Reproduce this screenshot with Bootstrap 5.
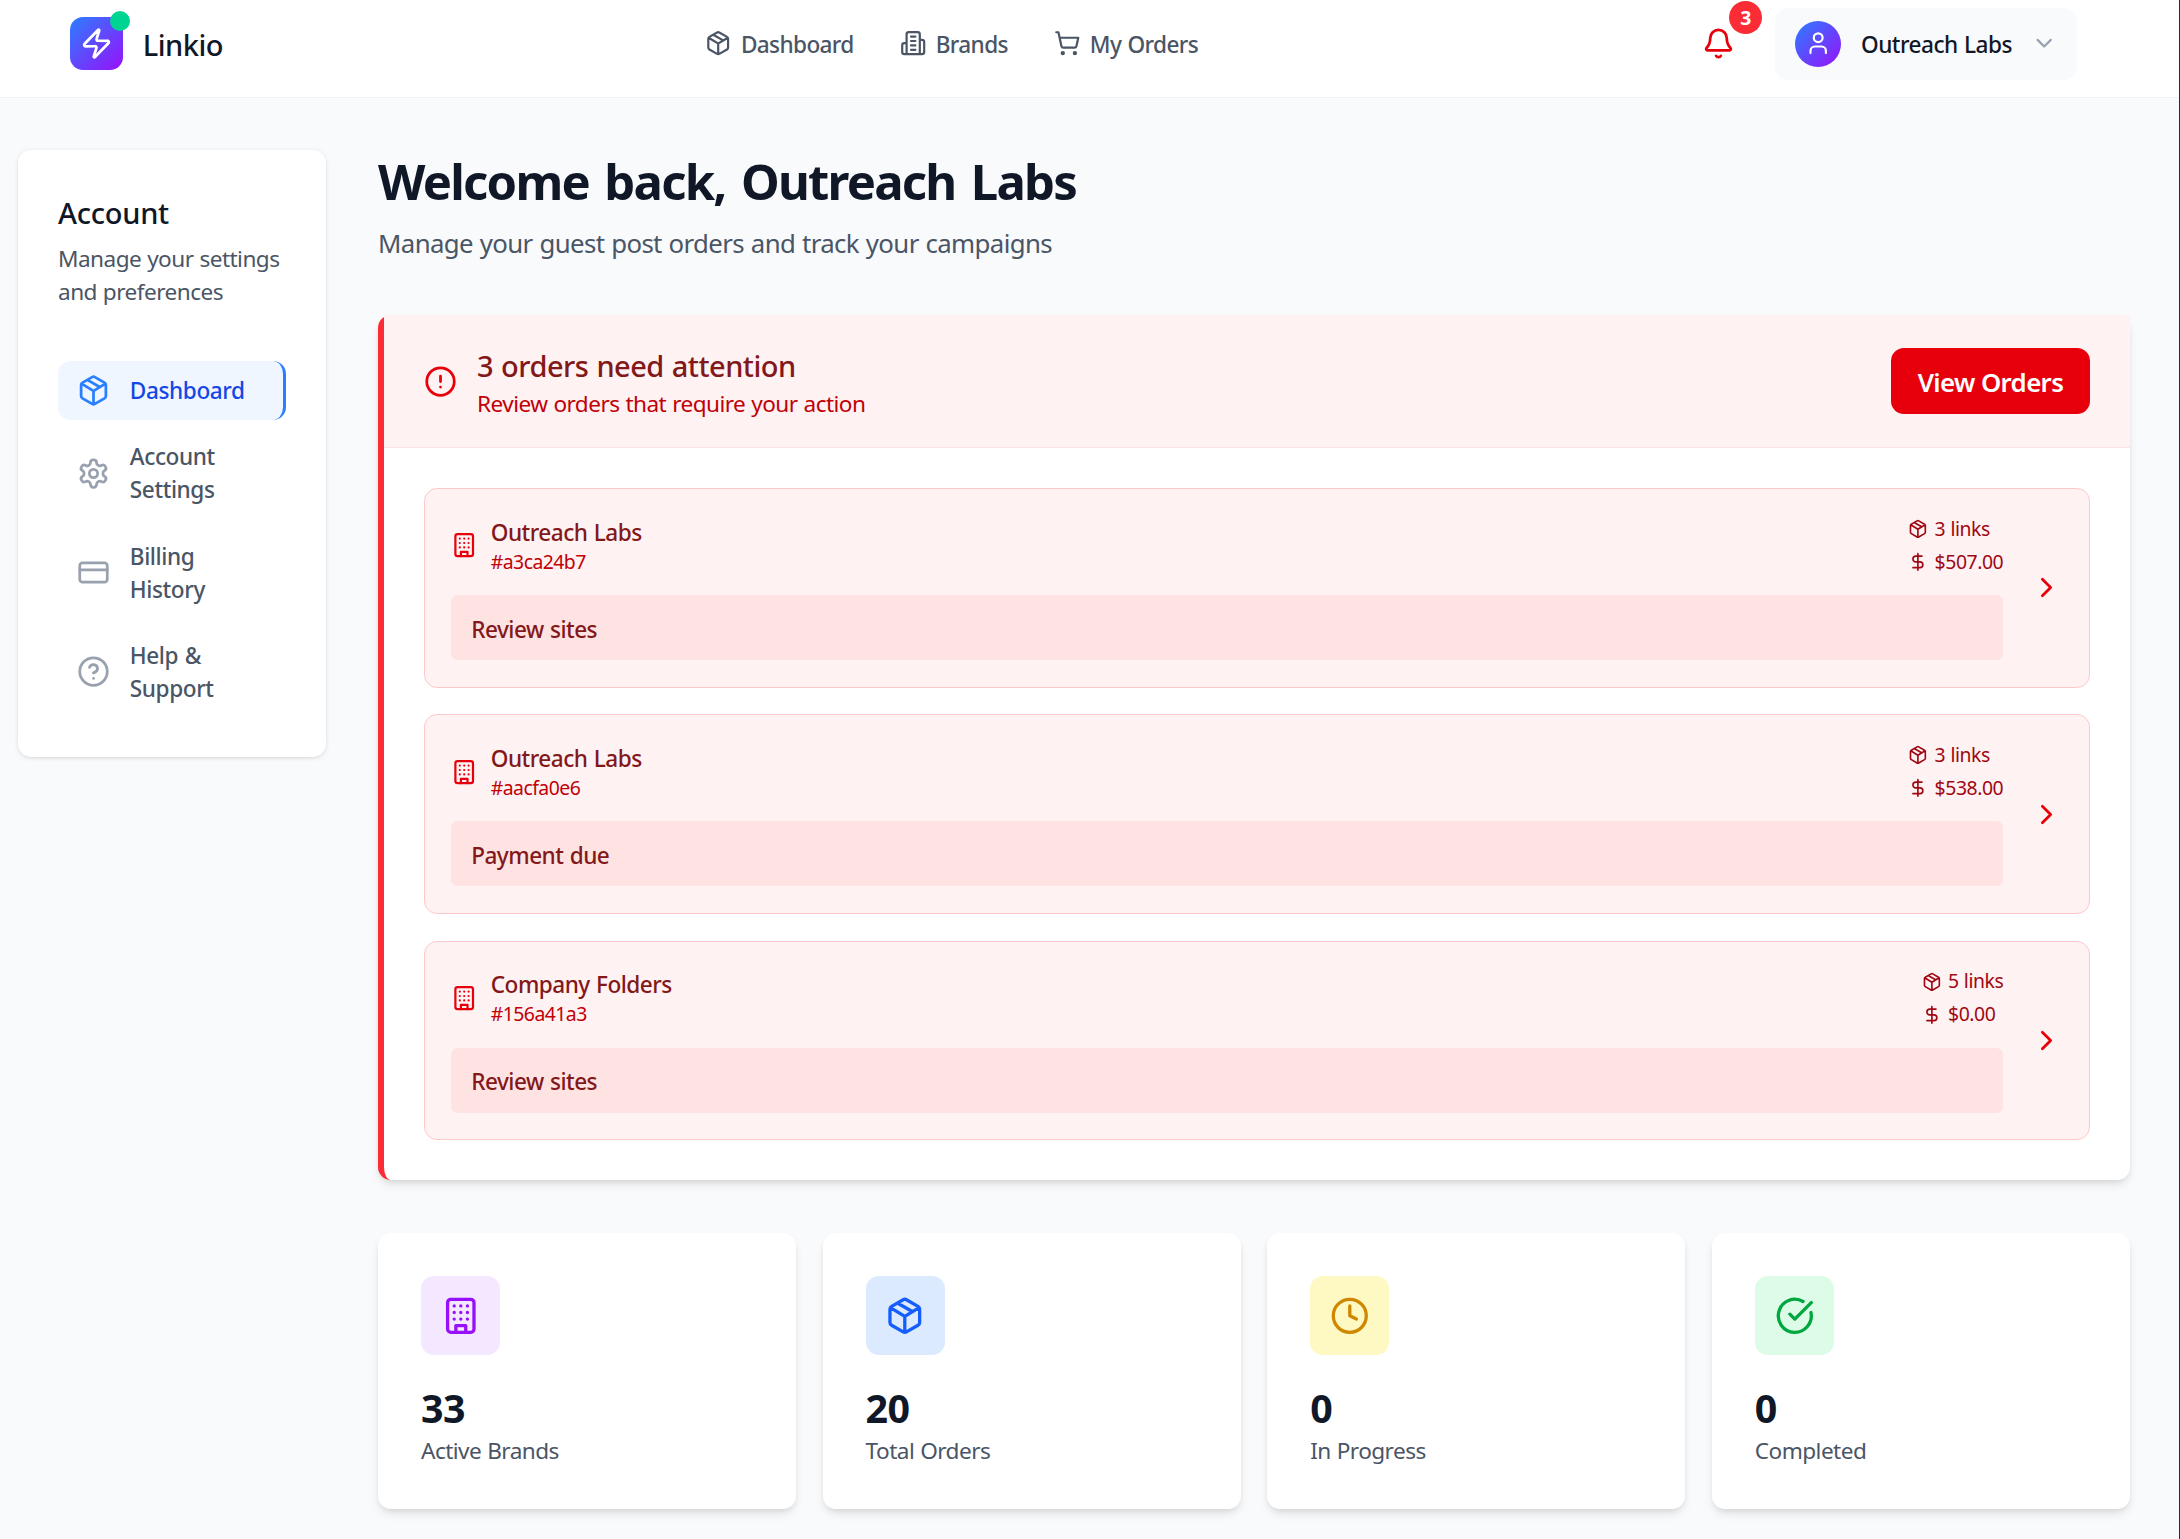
<!DOCTYPE html>
<html lang="en">
<head>
<meta charset="utf-8">
<meta name="viewport" content="width=device-width, initial-scale=1">
<title>Linkio Dashboard</title>
<link href="https://cdn.jsdelivr.net/npm/bootstrap@5.3.0/dist/css/bootstrap.min.css" rel="stylesheet">
<style>
body{font-family:"Noto Sans","Open Sans",sans-serif;font-size:22.6px;line-height:33px;letter-spacing:-.54px;word-spacing:.6px;color:#101828;background:#f9fafc;border-right:1px solid #2b2b2b;min-height:1539px;overflow:hidden}
.ico{width:33px;height:33px;flex:none;fill:none;stroke:currentColor;stroke-width:2;stroke-linecap:round;stroke-linejoin:round;display:block}
.ico-md{width:26.4px;height:26.4px}
.ico-sm{width:19.8px;height:19.8px}
.ico-lg{width:39.6px;height:39.6px}
.semi{font-weight:500;letter-spacing:-.52px;word-spacing:1px}
.topbar{height:98px;border-bottom:1px solid #f0f2f5;padding:0 102px 10px 70px}
.brand{width:635px;gap:19.8px;font-size:29px;color:#101828}
.brand span:last-child{padding-top:2px}
.brand-mark{width:53px;height:53px;border-radius:13px;background:linear-gradient(135deg,#2b7fff,#9810fa);color:#fff}
.brand-dot{width:20px;height:20px;top:-6px;right:-7px;background:#00d492}
.topnav{gap:46px;letter-spacing:-.62px}
.topnav a{gap:9.5px;color:#4a5565;text-decoration:none}
.topnav span,.user-name{padding-top:1px}
.bell{color:#e7000b;margin-right:40px}
.bell-count{width:33px;height:33px;left:27px;top:-26px;background:#fb2c36;font-size:19.4px;font-weight:700;color:#fff}
.user-pill{width:302px;height:72px;border-radius:13px;background:#f9fafc;padding:0 20px}
.user-pill .chev{color:#99a1af}
.avatar{width:46px;height:46px;background:linear-gradient(135deg,#2b7fff,#9810fa);color:#fff}
.shell{padding:52px 49px 0 18px;gap:52px}
.side{width:308px;height:607px;flex:none;border-radius:13px;background:#fff;padding:40px;box-shadow:0 1px 5px rgba(0,0,0,.1),0 1px 3px -1px rgba(0,0,0,.1)}
.side h2{font-size:29px;line-height:46px;letter-spacing:-.25px;margin-bottom:6px}
.side p{color:#4a5565;margin-bottom:52.6px;white-space:nowrap}
.side-nav{gap:7px;letter-spacing:-.4px}
.side-nav a{color:#4a5565;text-decoration:none;padding:13.2px 19px;gap:19.8px;border-radius:13px}
.side-nav .ico{color:#99a1af}
.side-nav a.current{background:#eff6ff;color:#1447e6;border-right:3px solid #2b7fff}
.side-nav a.current .ico{color:#2b7fff}
.hello{font-size:49px;line-height:62px;font-weight:700;letter-spacing:-1.75px;word-spacing:4.4px;margin:0 0 11px}
.hello-sub{font-size:25.8px;line-height:40px;letter-spacing:-.62px;word-spacing:.7px;color:#4a5565;margin-bottom:52px}
.raised{box-shadow:0 6px 11px -2px rgba(0,0,0,.1),0 3px 7px -3px rgba(0,0,0,.12)}
.alert-panel{border-left:6px solid #fb2c36;border-radius:13px;background:#fff;height:865px}
.alert-top{height:133px;background:#fef2f2;border-bottom:1px solid #ffe2e2;padding:0 40px}
.alert-top .ico{color:#e7000b}
.alert-top h3{font-size:29px;line-height:42px;margin:0;padding-top:3px;color:#82181a}
.alert-top p{color:#c10007;margin:0}
.btn-view,.btn-view:hover{background:#e7000b;color:#fff;border:0;border-radius:13px;width:199px;height:66px;font-size:25.8px;font-weight:600;letter-spacing:-.62px;padding:2px 0 0}
.order-list{padding:40px;gap:26.4px}
.order{border:1px solid #ffc9c9;border-radius:13px;background:#fef2f2;padding:26.4px;gap:26.4px;height:199.9px}
.order .ico{color:#e7000b}
.order-text{margin-left:13px}
.order-name{color:#82181a}
.order-id{font-size:19.4px;line-height:26.4px;color:#c10007}
.order-meta{font-size:19.4px;line-height:26.4px;letter-spacing:-.45px;gap:6.6px;color:#9f0712}
.order-meta .ico{color:#9f0712}
.order-meta .line{gap:6.6px}
.order-task{background:#ffe2e2;border-radius:6.6px;height:65px;color:#82181a;padding:3px 19.8px 0;margin-top:19.8px}
.stats{gap:26.4px;margin-top:53px}
.stat{flex:1 1 0;height:276px;border-radius:13px;background:#fff;padding:43px}
.stat-ico{width:79.2px;height:79.2px;border-radius:13px;margin-bottom:27px}
.stat strong{display:block;font-size:39.4px;line-height:53px;margin-bottom:-1.6px}
.stat span{color:#4a5565}
.c-purple{background:#f3e8ff;color:#9810fa}
.c-blue{background:#dbeafe;color:#155dfc}
.c-yellow{background:#fef9c2;color:#d08700}
.c-green{background:#dcfce7;color:#00a63e}
</style>
</head>
<body>
<svg width="0" height="0" class="position-absolute" aria-hidden="true">
<symbol id="package" viewBox="0 0 24 24"><path d="M11 21.73a2 2 0 0 0 2 0l7-4A2 2 0 0 0 21 16V8a2 2 0 0 0-1-1.73l-7-4a2 2 0 0 0-2 0l-7 4A2 2 0 0 0 3 8v8a2 2 0 0 0 1 1.73zM12 22V12M3.3 7l7.703 4.734a2 2 0 0 0 1.994 0L20.7 7M7.5 4.27l9 5.15"/></symbol>
<symbol id="zap" viewBox="0 0 24 24"><path d="M4 14a1 1 0 0 1-.78-1.63l9.9-10.2a.5.5 0 0 1 .86.46l-1.92 6.02A1 1 0 0 0 13 10h7a1 1 0 0 1 .78 1.63l-9.9 10.2a.5.5 0 0 1-.86-.46l1.92-6.02A1 1 0 0 0 11 14z"/></symbol>
<symbol id="towers" viewBox="0 0 24 24"><path d="M6 22V4a2 2 0 0 1 2-2h8a2 2 0 0 1 2 2v18ZM6 12H4a2 2 0 0 0-2 2v6a2 2 0 0 0 2 2h2M18 9h2a2 2 0 0 1 2 2v9a2 2 0 0 1-2 2h-2M10 6h4M10 10h4M10 14h4M10 18h4"/></symbol>
<symbol id="cart" viewBox="0 0 24 24"><circle cx="8" cy="21" r="1"/><circle cx="19" cy="21" r="1"/><path d="M2.05 2.05h2l2.66 12.42a2 2 0 0 0 2 1.58h9.78a2 2 0 0 0 1.95-1.57l1.65-7.43H5.12"/></symbol>
<symbol id="bell" viewBox="0 0 24 24"><path d="M10.268 21a2 2 0 0 0 3.464 0M3.262 15.326A1 1 0 0 0 4 17h16a1 1 0 0 0 .74-1.673C19.41 13.956 18 12.499 18 8A6 6 0 0 0 6 8c0 4.499-1.411 5.956-2.738 7.326"/></symbol>
<symbol id="user" viewBox="0 0 24 24"><path d="M19 21v-2a4 4 0 0 0-4-4H9a4 4 0 0 0-4 4v2"/><circle cx="12" cy="7" r="4"/></symbol>
<symbol id="down" viewBox="0 0 24 24"><path d="m6 9 6 6 6-6"/></symbol>
<symbol id="right" viewBox="0 0 24 24"><path d="m9 18 6-6-6-6"/></symbol>
<symbol id="gear" viewBox="0 0 24 24"><path d="M12.22 2h-.44a2 2 0 0 0-2 2v.18a2 2 0 0 1-1 1.73l-.43.25a2 2 0 0 1-2 0l-.15-.08a2 2 0 0 0-2.73.73l-.22.38a2 2 0 0 0 .73 2.73l.15.1a2 2 0 0 1 1 1.72v.51a2 2 0 0 1-1 1.74l-.15.09a2 2 0 0 0-.73 2.73l.22.38a2 2 0 0 0 2.73.73l.15-.08a2 2 0 0 1 2 0l.43.25a2 2 0 0 1 1 1.73V20a2 2 0 0 0 2 2h.44a2 2 0 0 0 2-2v-.18a2 2 0 0 1 1-1.73l.43-.25a2 2 0 0 1 2 0l.15.08a2 2 0 0 0 2.73-.73l.22-.39a2 2 0 0 0-.73-2.73l-.15-.08a2 2 0 0 1-1-1.74v-.5a2 2 0 0 1 1-1.74l.15-.09a2 2 0 0 0 .73-2.73l-.22-.38a2 2 0 0 0-2.73-.73l-.15.08a2 2 0 0 1-2 0l-.43-.25a2 2 0 0 1-1-1.73V4a2 2 0 0 0-2-2z"/><circle cx="12" cy="12" r="3"/></symbol>
<symbol id="creditcard" viewBox="0 0 24 24"><rect width="20" height="14" x="2" y="5" rx="2"/><path d="M2 10h20"/></symbol>
<symbol id="help" viewBox="0 0 24 24"><circle cx="12" cy="12" r="10"/><path d="M9.09 9a3 3 0 0 1 5.83 1c0 2-3 3-3 3M12 17h.01"/></symbol>
<symbol id="warn" viewBox="0 0 24 24"><circle cx="12" cy="12" r="10"/><path d="M12 8v4M12 16h.01"/></symbol>
<symbol id="building" viewBox="0 0 24 24"><rect width="16" height="20" x="4" y="2" rx="2"/><path d="M9 22v-4h6v4M8 6h.01M16 6h.01M12 6h.01M12 10h.01M12 14h.01M16 10h.01M16 14h.01M8 10h.01M8 14h.01"/></symbol>
<symbol id="dollar" viewBox="0 0 24 24"><path d="M12 2v20M17 5H9.5a3.5 3.5 0 0 0 0 7h5a3.5 3.5 0 0 1 0 7H6"/></symbol>
<symbol id="clock" viewBox="0 0 24 24"><circle cx="12" cy="12" r="10"/><path d="M12 6v6l4 2"/></symbol>
<symbol id="done" viewBox="0 0 24 24"><path d="M21.801 10A10 10 0 1 1 17 3.335M9 11l3 3L22 4"/></symbol>
</svg>

<header class="topbar bg-white d-flex align-items-center">
  <a href="#" class="brand d-flex align-items-center semi text-decoration-none">
    <span class="brand-mark position-relative d-flex align-items-center justify-content-center">
      <svg class="ico"><use href="#zap"/></svg>
      <i class="brand-dot position-absolute rounded-circle"></i>
    </span>
    <span>Linkio</span>
  </a>
  <nav class="topnav d-flex semi">
    <a href="#" class="d-flex align-items-center"><svg class="ico ico-md"><use href="#package"/></svg><span>Dashboard</span></a>
    <a href="#" class="d-flex align-items-center"><svg class="ico ico-md"><use href="#towers"/></svg><span>Brands</span></a>
    <a href="#" class="d-flex align-items-center"><svg class="ico ico-md"><use href="#cart"/></svg><span>My Orders</span></a>
  </nav>
  <div class="d-flex align-items-center ms-auto">
    <a href="#" class="bell position-relative"><svg class="ico"><use href="#bell"/></svg>
      <b class="bell-count position-absolute rounded-circle d-flex align-items-center justify-content-center">3</b></a>
    <div class="user-pill d-flex align-items-center semi">
      <span class="avatar rounded-circle d-flex align-items-center justify-content-center me-3"><svg class="ico ico-md"><use href="#user"/></svg></span>
      <span class="user-name ms-1">Outreach Labs</span>
      <svg class="ico ico-md ms-auto chev"><use href="#down"/></svg>
    </div>
  </div>
</header>

<div class="shell d-flex align-items-start">
  <aside class="side">
    <h2 class="semi">Account</h2>
    <p>Manage your settings<br>and preferences</p>
    <nav class="side-nav d-flex flex-column semi">
      <a href="#" class="current d-flex align-items-center"><svg class="ico"><use href="#package"/></svg><span>Dashboard</span></a>
      <a href="#" class="d-flex align-items-center"><svg class="ico"><use href="#gear"/></svg><span>Account<br>Settings</span></a>
      <a href="#" class="d-flex align-items-center"><svg class="ico"><use href="#creditcard"/></svg><span>Billing<br>History</span></a>
      <a href="#" class="d-flex align-items-center"><svg class="ico"><use href="#help"/></svg><span>Help &amp;<br>Support</span></a>
    </nav>
  </aside>

  <main class="flex-grow-1">
    <h1 class="hello">Welcome back, Outreach Labs</h1>
    <p class="hello-sub">Manage your guest post orders and track your campaigns</p>

    <section class="alert-panel raised">
      <div class="alert-top d-flex align-items-center">
        <svg class="ico"><use href="#warn"/></svg>
        <div class="ms-3 ps-1">
          <h3 class="semi">3 orders need attention</h3>
          <p>Review orders that require your action</p>
        </div>
        <button type="button" class="btn btn-view ms-auto">View Orders</button>
      </div>
      <div class="order-list d-flex flex-column">
        <article class="order d-flex align-items-center">
          <div class="flex-grow-1">
            <div class="d-flex align-items-center">
              <svg class="ico ico-md"><use href="#building"/></svg>
              <div class="order-text"><div class="order-name semi">Outreach Labs</div><div class="order-id">#a3ca24b7</div></div>
              <div class="order-meta d-flex flex-column ms-auto">
                <div class="line d-flex align-items-center"><svg class="ico ico-sm"><use href="#package"/></svg><span>3 links</span></div>
                <div class="line d-flex align-items-center"><svg class="ico ico-sm"><use href="#dollar"/></svg><span>$507.00</span></div>
              </div>
            </div>
            <div class="order-task semi d-flex align-items-center">Review sites</div>
          </div>
          <svg class="ico"><use href="#right"/></svg>
        </article>
        <article class="order d-flex align-items-center">
          <div class="flex-grow-1">
            <div class="d-flex align-items-center">
              <svg class="ico ico-md"><use href="#building"/></svg>
              <div class="order-text"><div class="order-name semi">Outreach Labs</div><div class="order-id">#aacfa0e6</div></div>
              <div class="order-meta d-flex flex-column ms-auto">
                <div class="line d-flex align-items-center"><svg class="ico ico-sm"><use href="#package"/></svg><span>3 links</span></div>
                <div class="line d-flex align-items-center"><svg class="ico ico-sm"><use href="#dollar"/></svg><span>$538.00</span></div>
              </div>
            </div>
            <div class="order-task semi d-flex align-items-center">Payment due</div>
          </div>
          <svg class="ico"><use href="#right"/></svg>
        </article>
        <article class="order d-flex align-items-center">
          <div class="flex-grow-1">
            <div class="d-flex align-items-center">
              <svg class="ico ico-md"><use href="#building"/></svg>
              <div class="order-text"><div class="order-name semi">Company Folders</div><div class="order-id">#156a41a3</div></div>
              <div class="order-meta d-flex flex-column ms-auto">
                <div class="line d-flex align-items-center"><svg class="ico ico-sm"><use href="#package"/></svg><span>5 links</span></div>
                <div class="line d-flex align-items-center"><svg class="ico ico-sm"><use href="#dollar"/></svg><span>$0.00</span></div>
              </div>
            </div>
            <div class="order-task semi d-flex align-items-center">Review sites</div>
          </div>
          <svg class="ico"><use href="#right"/></svg>
        </article>
      </div>
    </section>

    <section class="stats d-flex">
      <div class="stat raised"><div class="stat-ico c-purple d-flex align-items-center justify-content-center"><svg class="ico ico-lg"><use href="#building"/></svg></div><strong>33</strong><span>Active Brands</span></div>
      <div class="stat raised"><div class="stat-ico c-blue d-flex align-items-center justify-content-center"><svg class="ico ico-lg"><use href="#package"/></svg></div><strong>20</strong><span>Total Orders</span></div>
      <div class="stat raised"><div class="stat-ico c-yellow d-flex align-items-center justify-content-center"><svg class="ico ico-lg"><use href="#clock"/></svg></div><strong>0</strong><span>In Progress</span></div>
      <div class="stat raised"><div class="stat-ico c-green d-flex align-items-center justify-content-center"><svg class="ico ico-lg"><use href="#done"/></svg></div><strong>0</strong><span>Completed</span></div>
    </section>
  </main>
</div>
<script src="https://cdn.jsdelivr.net/npm/bootstrap@5.3.0/dist/js/bootstrap.bundle.min.js"></script>
</body>
</html>
